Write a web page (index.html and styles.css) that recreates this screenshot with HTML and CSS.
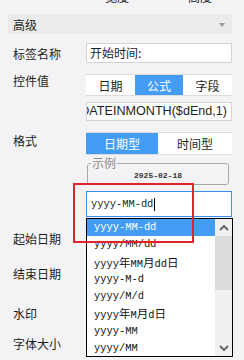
FILE: index.html
```html
<!DOCTYPE html>
<html lang="zh-CN">
<head>
    <meta charset="UTF-8">
    <title>日期控件属性</title>
    <link rel="stylesheet" href="styles.css">
</head>
<body>

    <div class="top-cut">
        <span class="cut-width">宽度</span>
        <span class="cut-height">高度</span>
    </div>

    <div class="panel">
        <div class="section-head">
            <span>高级</span>
            <span class="caret-down"></span>
        </div>

        <div class="row row-name">
            <div class="label">标签名称</div>
            <div class="control">
                <div class="text-input">开始时间:</div>
            </div>
        </div>

        <div class="row row-value">
            <div class="label">控件值</div>
            <div class="control stack">
                <div class="segmented thirds">
                    <span>日期</span>
                    <span class="active">公式</span>
                    <span>字段</span>
                </div>
                <div class="text-input formula"><span>DATEINMONTH($dEnd,1)</span></div>
            </div>
        </div>

        <div class="row row-format">
            <div class="label">格式</div>
            <div class="control stack">
                <div class="segmented halves">
                    <span class="active">日期型</span>
                    <span>时间型</span>
                </div>
                <fieldset class="sample">
                    <legend>示例</legend>
                    <div class="sample-value">2025-02-18</div>
                </fieldset>
                <div class="combo-input">yyyy-MM-dd<span class="text-caret"></span></div>
            </div>
        </div>

        <div class="plain-label lbl-start">起始日期</div>
        <div class="plain-label lbl-end">结束日期</div>
        <div class="plain-label lbl-mark">水印</div>
        <div class="plain-label lbl-size">字体大小</div>
    </div>

    <!-- open list of the format combo -->
    <div class="dropdown">
        <ul class="options">
            <li class="selected">yyyy-MM-dd</li>
            <li>yyyy/MM/dd</li>
            <li>yyyy<span class="cjk">年</span>MM<span class="cjk">月</span>dd<span class="cjk">日</span></li>
            <li>yyyy-M-d</li>
            <li>yyyy/M/d</li>
            <li>yyyy<span class="cjk">年</span>M<span class="cjk">月</span>d<span class="cjk">日</span></li>
            <li>yyyy-MM</li>
            <li>yyyy/MM</li>
        </ul>
        <div class="scrollbar">
            <div class="scroll-btn">
                <svg width="10" height="6" viewBox="0 0 10 6"><polyline points="1,5 5,1 9,5" fill="none" stroke="#606060" stroke-width="1.8"/></svg>
            </div>
            <div class="scroll-thumb"></div>
            <div class="scroll-track"></div>
            <div class="scroll-btn">
                <svg width="10" height="6" viewBox="0 0 10 6"><polyline points="1,1 5,5 9,1" fill="none" stroke="#606060" stroke-width="1.8"/></svg>
            </div>
        </div>
    </div>

    <div class="highlight"></div>

</body>
</html>
```

FILE: styles.css
```css
body {
    margin: 0;
    background-color: #f3f3f5;
    font-family: "Noto Sans CJK SC", sans-serif;
    font-size: 12px;
    color: #1e1e1e;
    width: 244px;
    height: 360px;
    overflow: hidden;
    position: relative;
}
.top-cut {
    height: 5px;
    overflow: hidden;
    display: flex;
}
.top-cut span {
    display: block;
    line-height: 12px;
    margin-top: -9px;
    font-size: 12px;
}
.cut-width {
    margin-left: 105px;
}
.cut-height {
    margin-left: 59px;
}
.panel {
    width: 224px;
    margin: 9px 0 0 8px;
}
.section-head {
    height: 20px;
    background-color: #ebebeb;
    display: flex;
    align-items: center;
    justify-content: space-between;
    padding: 0 7px 0 5px;
}
.caret-down {
    width: 0;
    height: 0;
    border-left: 3.5px solid transparent;
    border-right: 3.5px solid transparent;
    border-top: 4px solid #9a9a9a;
    margin-top: 2px;
}
.row {
    display: grid;
    grid-template-columns: 78px 146px;
}
.label {
    padding-left: 5px;
    line-height: 13px;
}
.row-name {
    margin-top: 9px;
    align-items: center;
}
.row-value {
    margin-top: 11px;
}
.row-format {
    margin-top: 11px;
}
.row-format .label {
    padding-top: 2px;
}
.stack {
    display: flex;
    flex-direction: column;
}
.text-input {
    height: 20px;
    box-sizing: border-box;
    border: 1px solid #d3d3d3;
    background-color: #fff;
    padding-left: 3px;
    line-height: 18px;
    font-size: 12px;
    white-space: nowrap;
}
.formula {
    height: 19px;
    margin-top: 6px;
    display: flex;
    justify-content: flex-end;
    overflow: hidden;
    padding: 0 4px 0 0;
    font-family: "Liberation Sans", sans-serif;
    font-size: 12.6px;
    line-height: 17px;
}
.formula span {
    flex-shrink: 0;
}
.segmented {
    display: grid;
    background-color: #fff;
    border-top: 1px solid #dcdcdc;
    border-bottom: 1px solid #dcdcdc;
    font-size: 12px;
}
.segmented span {
    display: flex;
    align-items: center;
    justify-content: center;
}
.segmented .active {
    background-color: #439df6;
    color: #fff;
}
.thirds {
    grid-template-columns: 49px 48px 49px;
    height: 20px;
}
.halves {
    grid-template-columns: 72px 74px;
    height: 21px;
}
.sample {
    margin: 4px 3px 0 1px;
    padding: 0;
    height: 26px;
    box-sizing: border-box;
    border: 1px solid #a8a8a8;
    border-radius: 3px;
}
.sample legend {
    padding: 0 1px;
    margin-left: 3px;
    color: #8c8c8c;
    font-size: 12px;
    line-height: 8px;
}
.sample-value {
    text-align: center;
    font-family: "Liberation Mono", monospace;
    font-size: 8px;
    font-weight: bold;
    color: #333;
    line-height: 10px;
    margin-top: 4px;
}
.combo-input {
    margin-top: 6px;
    height: 26px;
    box-sizing: border-box;
    border: 1px solid #3b8ff0;
    background-color: #fff;
    padding-left: 4px;
    font-family: "Liberation Mono", monospace;
    font-size: 10.4px;
    line-height: 24px;
    display: flex;
    align-items: center;
}
.text-caret {
    display: inline-block;
    width: 1px;
    height: 13px;
    background-color: #000;
    margin-left: 1px;
}
.plain-label {
    padding-left: 5px;
    line-height: 13px;
}
.lbl-start {
    margin-top: 15px;
}
.lbl-end {
    margin-top: 22px;
}
.lbl-mark {
    margin-top: 27px;
}
.lbl-size {
    margin-top: 17px;
}
.dropdown {
    position: absolute;
    left: 86px;
    top: 218px;
    width: 147px;
    height: 139px;
    box-sizing: border-box;
    border: 1px solid #000;
    background-color: #fff;
    display: flex;
}
.options {
    list-style: none;
    margin: 0;
    padding: 0;
    flex: 1;
    font-family: "Liberation Mono", monospace;
    font-size: 10.4px;
}
.options li {
    height: 17.3px;
    line-height: 17.3px;
    padding-left: 7px;
    white-space: nowrap;
    color: #111;
}
.options .selected {
    background-color: #439df6;
    color: #fff;
}
.cjk {
    font-family: "Noto Sans CJK SC", sans-serif;
    font-size: 11.5px;
}
.scrollbar {
    width: 17px;
    display: flex;
    flex-direction: column;
    background-color: #f0f0f0;
}
.scroll-btn {
    height: 17px;
    display: flex;
    align-items: center;
    justify-content: center;
}
.scroll-thumb {
    height: 54px;
    background-color: #dcdcdc;
}
.scroll-track {
    flex: 1;
}
.highlight {
    position: absolute;
    left: 73px;
    top: 183px;
    width: 121px;
    height: 60px;
    box-sizing: border-box;
    border: 2px solid #e3232b;
}
```
